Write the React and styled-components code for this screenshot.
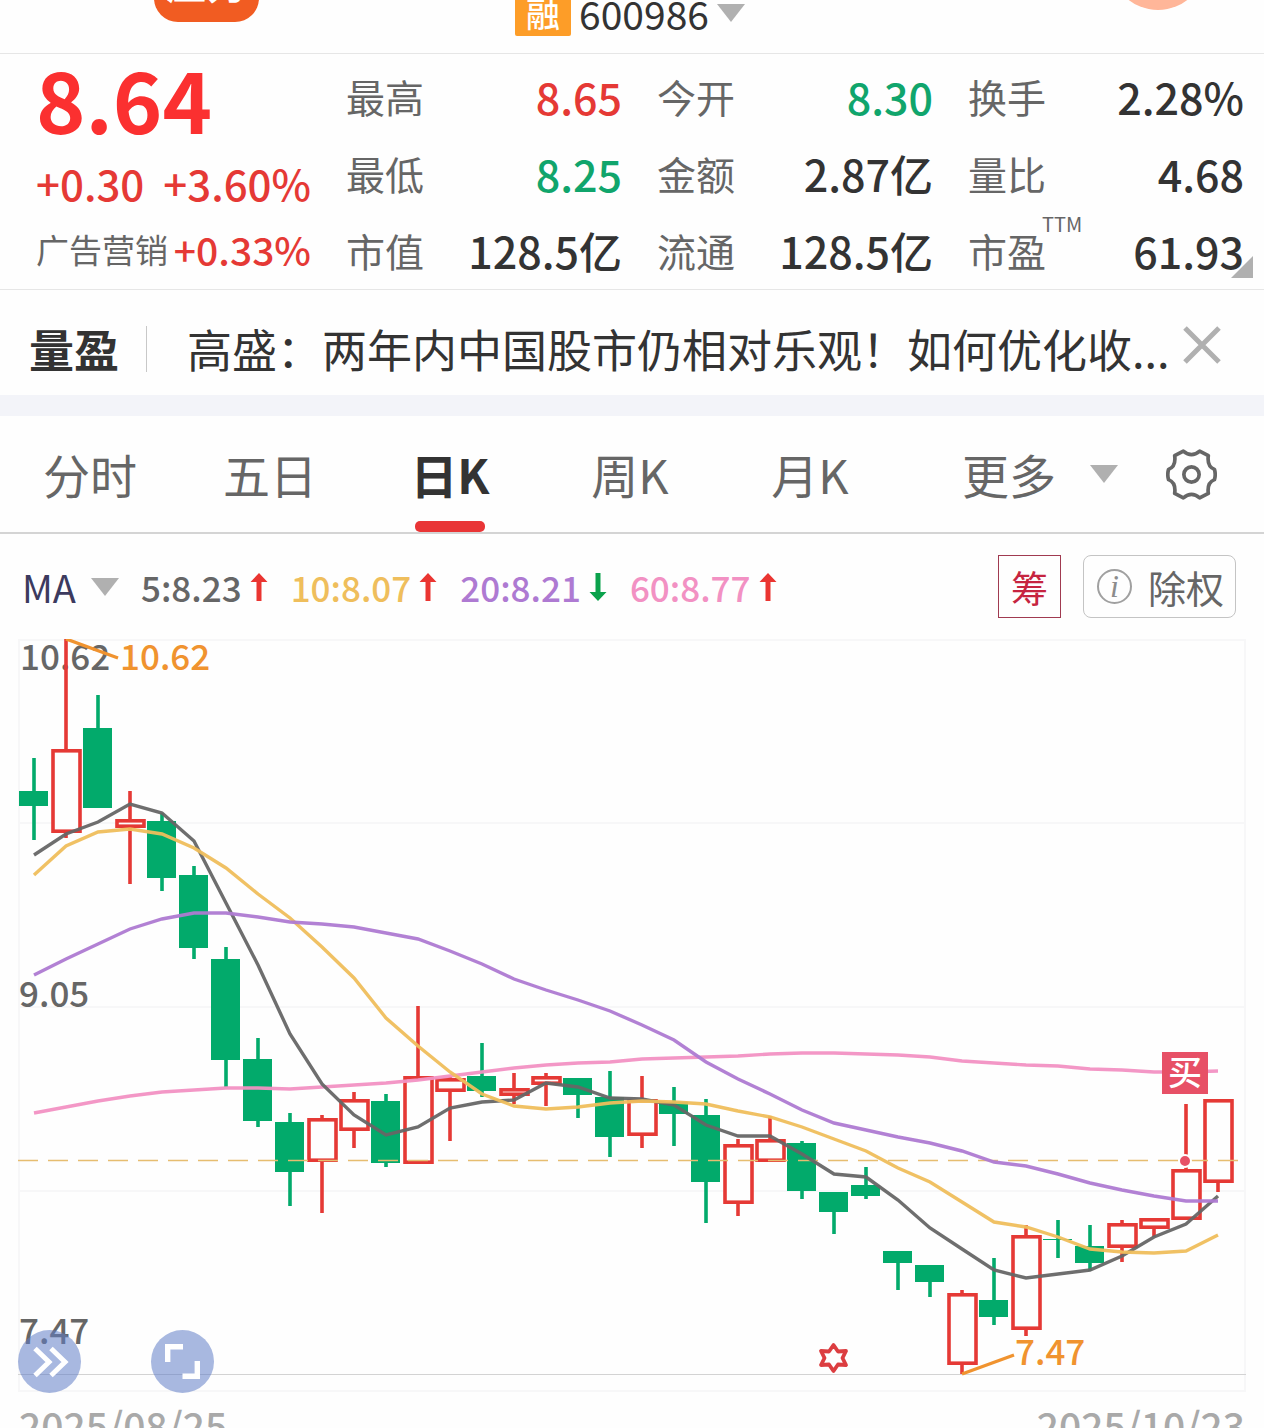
import React from "react";
import styled, { createGlobalStyle } from "styled-components";

const color = {
  red: "#e53935",
  brightRed: "#fb3030",
  green: "#10a56c",
  candleGreen: "#02aa6b",
  ink: "#333333",
  label: "#666666",
  muted: "#b0b0b0",
  orange: "#f0932f",
  ma5: "#666666",
  ma10: "#efbe5c",
  ma20: "#ae7ad2",
  ma60: "#f291c3",
};

const Global = createGlobalStyle`
  * { box-sizing: border-box; }
  body {
    margin: 0;
    background: #fefefe;
    font-family: "Noto Sans CJK SC", "Noto Sans", sans-serif;
    color: ${color.ink};
  }
  button {
    border: 0;
    padding: 0;
    background: none;
    font: inherit;
    color: inherit;
    cursor: pointer;
  }
`;

const Page = styled.main`
  height: 100vh;
  overflow: hidden;
`;

/* ---------- header ---------- */
const Header = styled.header`
  display: grid;
  grid-template-columns: 1fr auto 1fr;
  grid-template-rows: 53px;
  align-items: end;
  height: 54px;
  overflow: hidden;
  border-bottom: 1px solid #e6e6e6;
`;

const CommunityTag = styled.button`
  justify-self: start;
  width: 105px;
  height: 60px;
  margin: 0 0 31px 154px;
  padding-bottom: 20px;
  border-radius: 24px;
  background: #f15c22;
  color: #fff;
  font-size: 40px;
  font-weight: 700;
  line-height: 40px;
`;

const StockPicker = styled.button`
  display: flex;
  align-items: center;
  gap: 8px;
  margin-bottom: 7px;
  padding-right: 4px;
  font-size: 39px;
  line-height: 48px;
`;

const MarginTag = styled.span`
  align-self: flex-end;
  width: 56px;
  height: 56px;
  margin-bottom: 10px;
  border-radius: 2px;
  background: #fd9d28;
  color: #fff;
  font-size: 34px;
  font-weight: 500;
  line-height: 66px;
  text-align: center;
`;

const Caret = styled.span`
  width: 0;
  height: 0;
  border: 14px solid transparent;
  border-top: 18px solid ${color.muted};
  border-bottom: 0;
`;

const Avatar = styled.span`
  justify-self: end;
  width: 96px;
  height: 96px;
  margin: 0 58px 43px 0;
  border-radius: 50%;
  background: #ffb699;
`;

/* ---------- quote ---------- */
const Quote = styled.section`
  display: grid;
  grid-template-columns: 275fr 898fr;
  column-gap: 35px;
  height: 236px;
  padding: 0 20px 0 36px;
  border-bottom: 1px solid #e6e6e6;
  position: relative;
`;

const PriceLine = styled.div`
  display: flex;
  align-items: center;
  justify-content: space-between;
  height: ${(p) => p.$height}px;
  color: ${color.red};
  font-size: ${(p) => p.$size}px;
  font-weight: 500;
  white-space: nowrap;
`;

const Price = styled.strong`
  color: ${color.brightRed};
  font-weight: 700;
`;

const Sector = styled.span`
  color: ${color.label};
  font-size: 33px;
  font-weight: 400;
`;

const StatGrid = styled.dl`
  display: grid;
  grid-template-columns: repeat(3, 1fr);
  grid-auto-rows: 77px;
  column-gap: 35px;
  margin: 3px 0 0;
`;

const Stat = styled.div`
  display: flex;
  align-items: center;
  justify-content: space-between;
  white-space: nowrap;
`;

const StatLabel = styled.dt`
  position: relative;
  color: ${color.label};
  font-size: 39px;
`;

const Superscript = styled.sup`
  position: absolute;
  left: 74px;
  top: -10px;
  font-size: 20px;
  line-height: 24px;
`;

const StatValue = styled.dd`
  margin: 0;
  color: ${(p) => color[p.$tone] || color.ink};
  font-size: 43px;
  font-weight: 500;
`;

const Corner = styled.span`
  position: absolute;
  right: 11px;
  bottom: 11px;
  border: 11px solid ${color.muted};
  border-top-color: transparent;
  border-left-color: transparent;
`;

/* ---------- news ---------- */
const News = styled.section`
  display: flex;
  align-items: center;
  height: 105px;
  padding: 12px 43px 0 29px;
  font-size: 45px;
`;

const NewsBrand = styled.strong`
  padding-right: 27px;
  font-size: 45px;
`;

const Rule = styled.span`
  width: 1px;
  height: 46px;
  margin-right: 40px;
  background: #c8c8c8;
`;

const Headline = styled.a`
  flex: 1;
  min-width: 0;
  overflow: hidden;
  color: inherit;
  text-decoration: none;
  white-space: nowrap;
`;

const CloseButton = styled.button`
  display: flex;
  align-items: flex-start;
  width: 38px;
  height: 46px;
`;

const Band = styled.div`
  height: 21px;
  background: #f3f4f9;
`;

/* ---------- tabs ---------- */
const Tabs = styled.nav`
  display: grid;
  grid-template-columns: repeat(5, 180fr) 364fr;
  height: 118px;
  border-bottom: 2px solid #d4d4d4;
`;

const Tab = styled.button`
  display: flex;
  flex-direction: column;
  align-items: center;
  justify-content: flex-end;
  color: ${(p) => (p.$active ? color.ink : color.label)};
  font-size: 47px;
  font-weight: ${(p) => (p.$active ? 700 : 400)};
  line-height: 94px;

  &::after {
    content: "";
    width: 70px;
    height: 11px;
    border-radius: 5px;
    background: ${(p) => (p.$active ? "#e93536" : "transparent")};
  }
`;

const TabTools = styled.div`
  display: flex;
  align-items: center;
  justify-content: space-between;
  padding: 0 47px 0 62px;
`;

const MoreButton = styled.button`
  display: flex;
  align-items: center;
  gap: 34px;
  color: ${color.label};
  font-size: 47px;
  line-height: 94px;
`;

const SettingsButton = styled.button`
  width: 51px;
  height: 51px;
  svg { display: block; }
`;

/* ---------- indicators ---------- */
const Indicators = styled.section`
  display: flex;
  align-items: center;
  gap: 22px;
  height: 105px;
  padding: 0 28px 0 22px;
`;

const IndicatorPicker = styled.button`
  display: flex;
  align-items: center;
  gap: 15px;
  color: #3c3a5e;
  font-size: 38px;
`;

const Average = styled.span`
  display: flex;
  align-items: center;
  gap: 7px;
  color: ${(p) => color[p.$line]};
  font-size: 35px;
  font-weight: 500;
  line-height: 48px;
  white-space: nowrap;
`;

const ChipButton = styled.button`
  width: 63px;
  height: 63px;
  margin-left: auto;
  border: 1px solid #a03a50;
  color: #c62440;
  font-size: 37px;
  line-height: 60px;
`;

const RightsButton = styled.button`
  display: flex;
  align-items: center;
  justify-content: space-between;
  width: 153px;
  height: 63px;
  padding: 0 11px 0 13px;
  border: 1px solid #c4c4c4;
  border-radius: 8px;
  color: ${color.label};
  font-size: 38px;
  line-height: 60px;
`;

const InfoMark = styled.span`
  width: 35px;
  height: 35px;
  border: 2px solid #a0a0a0;
  border-radius: 50%;
  color: #8c8c8c;
  font: italic 400 32px/30px "Liberation Serif", serif;
  text-align: center;
`;

/* ---------- chart ---------- */
const ChartArea = styled.section`
  position: relative;
`;

const ChartSvg = styled.svg`
  display: block;
  width: 100%;
  height: auto;
  font-size: 35px;
  font-weight: 500;
`;

const FloatingTools = styled.div`
  position: absolute;
  left: 18px;
  bottom: 10px;
  display: flex;
  gap: 70px;
`;

const RoundButton = styled.button`
  width: 63px;
  height: 63px;
  border-radius: 50%;
  background: rgba(97, 126, 199, 0.55);
  svg { display: block; }
`;

const Dates = styled.div`
  display: flex;
  justify-content: space-between;
  padding: 0 19px;
  color: #a9a9a9;
  font-size: 39px;
  font-weight: 500;
  line-height: 42px;
`;

/* direction, high, body top, body bottom, low */
const candles = [
  ["down", 758, 791, 806, 840],
  ["up", 639, 749, 833, 838],
  ["down", 695, 728, 808, 808],
  ["up", 791, 819, 828, 884],
  ["down", 813, 821, 878, 891],
  ["down", 866, 875, 948, 959],
  ["down", 947, 959, 1060, 1087],
  ["down", 1038, 1059, 1121, 1127],
  ["down", 1113, 1122, 1172, 1206],
  ["up", 1115, 1118, 1162, 1213],
  ["up", 1092, 1099, 1131, 1148],
  ["down", 1094, 1101, 1163, 1167],
  ["up", 1006, 1076, 1164, 1164],
  ["up", 1077, 1078, 1092, 1141],
  ["down", 1043, 1076, 1091, 1097],
  ["up", 1073, 1088, 1096, 1104],
  ["up", 1073, 1076, 1085, 1106],
  ["down", 1078, 1078, 1095, 1118],
  ["down", 1071, 1097, 1137, 1157],
  ["up", 1076, 1099, 1136, 1148],
  ["down", 1087, 1102, 1114, 1146],
  ["down", 1099, 1115, 1182, 1223],
  ["up", 1139, 1144, 1204, 1216],
  ["up", 1116, 1139, 1162, 1162],
  ["down", 1141, 1143, 1191, 1199],
  ["down", 1192, 1192, 1212, 1234],
  ["down", 1167, 1185, 1196, 1199],
  ["down", 1251, 1251, 1263, 1290],
  ["down", 1265, 1265, 1282, 1297],
  ["up", 1290, 1293, 1365, 1374],
  ["down", 1258, 1300, 1317, 1325],
  ["up", 1225, 1235, 1330, 1336],
  ["down", 1220, 1239, 1240, 1258],
  ["down", 1225, 1246, 1263, 1271],
  ["up", 1220, 1223, 1248, 1262],
  ["up", 1218, 1218, 1229, 1237],
  ["up", 1104, 1169, 1220, 1220],
  ["up", 1099, 1099, 1183, 1192],
];

const averages = {
  ma60: [1113, 1107, 1101, 1096, 1092, 1090, 1088, 1088, 1089, 1087, 1085, 1083, 1080, 1076, 1072, 1068, 1065, 1063, 1062, 1059, 1058, 1057, 1056, 1054, 1053, 1053, 1054, 1055, 1057, 1061, 1063, 1065, 1066, 1069, 1070, 1072, 1072, 1071],
  ma5: [855, 834, 822, 804, 813, 841, 903, 965, 1034, 1084, 1115, 1135, 1127, 1108, 1102, 1100, 1083, 1087, 1098, 1099, 1105, 1125, 1136, 1136, 1154, 1174, 1177, 1200, 1228, 1249, 1270, 1278, 1274, 1270, 1256, 1237, 1224, 1196],
  ma10: [875, 846, 832, 829, 834, 848, 868, 894, 918, 947, 978, 1018, 1046, 1072, 1094, 1106, 1109, 1107, 1103, 1101, 1102, 1104, 1111, 1117, 1127, 1139, 1151, 1168, 1182, 1202, 1222, 1227, 1237, 1249, 1252, 1253, 1251, 1235],
  ma20: [975, 959, 944, 929, 919, 913, 913, 917, 922, 924, 927, 933, 939, 951, 964, 979, 990, 1000, 1011, 1025, 1040, 1062, 1079, 1094, 1110, 1123, 1130, 1137, 1143, 1151, 1162, 1166, 1174, 1183, 1190, 1196, 1201, 1201],
};

const slot = (i) => 34 + 32 * i;

function Candle({ index, data }) {
  const [dir, high, top, bottom, low] = data;
  const x = slot(index);
  const up = dir === "up";
  const stroke = up ? color.red : color.candleGreen;
  return (
    <g>
      <path d={`M${x} ${high}V${low}`} stroke={stroke} strokeWidth="3.6" />
      {up ? (
        <rect x={x - 13} y={top + 1.8} width="27" height={Math.max(bottom - top - 3.6, 1)} fill="#fefefe" stroke={stroke} strokeWidth="3.6" />
      ) : (
        <rect x={x - 15} y={top} width="29" height={bottom - top} fill={stroke} />
      )}
    </g>
  );
}

function Chart() {
  return (
    <ChartSvg viewBox="0 639 1264 764" role="img" aria-label="日K线图">
      <g stroke="#f7f7f8" strokeWidth="2">
        {[640, 823, 1007, 1191, 1391].map((y) => (
          <path key={y} d={`M18 ${y}H1246`} />
        ))}
        <path d="M19 639V1392M1245 639V1392" />
      </g>
      <path d="M18 1374.5H1246" stroke="#d3d3d3" />
      <g fill={color.label}>
        <text x="20" y="670">10.62</text>
        <text x="19" y="1007">9.05</text>
        <text x="19" y="1344">7.47</text>
      </g>
      {candles.map((c, i) => (
        <Candle key={i} index={i} data={c} />
      ))}
      <path d="M18 1160.5H1238" stroke="#e6bd70" strokeWidth="1.4" strokeDasharray="20 10" />
      {Object.entries(averages).map(([name, ys]) => (
        <polyline
          key={name}
          points={ys.map((y, i) => `${slot(i)},${y}`).join(" ")}
          fill="none"
          stroke={color[name]}
          strokeOpacity="0.95"
          strokeWidth="3.4"
        />
      ))}
      <g fill={color.orange}>
        <path d="M66 639L118 658M962 1374L1014 1355" stroke={color.orange} strokeWidth="3.4" />
        <text x="120" y="670">10.62</text>
        <text x="1015" y="1365">7.47</text>
      </g>
      <path
        d="M833.5 1345L838 1351.500L846 1351L842.500 1358L846 1365L838 1364.500L833.500 1371L829 1364.500L821 1365L824.500 1358L821 1351L829 1351.500Z"
        fill="none"
        stroke="#dc3d40"
        strokeWidth="3.8"
        strokeLinejoin="round"
      />
      <circle cx="1185" cy="1161" r="6" fill="#e75066" stroke="#fefefe" strokeWidth="2" />
      <rect x="1162" y="1052" width="46" height="42" fill="#e75066" />
      <text x="1185" y="1085" fill="#fff" fontSize="34" textAnchor="middle">买</text>
    </ChartSvg>
  );
}

function TrendArrow({ down }) {
  return (
    <svg width="20" height="30" viewBox="0 0 20 30" aria-hidden="true">
      <path
        d={down ? "M7.500 1H12.500V20H18.500L10 29L1.500 20H7.500Z" : "M7.500 29H12.500V10H18.500L10 1L1.500 10H7.500Z"}
        fill={down ? "#0ba24c" : "#ea3531"}
      />
    </svg>
  );
}

const stats = [
  { label: "最高", value: "8.65", tone: "red" },
  { label: "今开", value: "8.30", tone: "green" },
  { label: "换手", value: "2.28%" },
  { label: "最低", value: "8.25", tone: "green" },
  { label: "金额", value: "2.87亿" },
  { label: "量比", value: "4.68" },
  { label: "市值", value: "128.5亿" },
  { label: "流通", value: "128.5亿" },
  { label: "市盈", value: "61.93", note: "TTM" },
];

const tabs = ["分时", "五日", "日K", "周K", "月K"];

const readings = [
  { line: "ma5", text: "5:8.23" },
  { line: "ma10", text: "10:8.07" },
  { line: "ma20", text: "20:8.21", down: true },
  { line: "ma60", text: "60:8.77" },
];

export default function App() {
  return (
    <Page>
      <Global />
      <Header>
        <CommunityTag>压力</CommunityTag>
        <StockPicker>
          <MarginTag>融</MarginTag>
          600986
          <Caret />
        </StockPicker>
        <Avatar />
      </Header>

      <Quote>
        <div>
          <PriceLine $height={86} $size={84}>
            <Price>8.64</Price>
          </PriceLine>
          <PriceLine $height={84} $size={42}>
            <span>+0.30</span>
            <span>+3.60%</span>
          </PriceLine>
          <PriceLine $height={50} $size={39}>
            <Sector>广告营销</Sector>
            <span>+0.33%</span>
          </PriceLine>
        </div>
        <StatGrid>
          {stats.map((s) => (
            <Stat key={s.label}>
              <StatLabel>
                {s.label}
                {s.note && <Superscript>{s.note}</Superscript>}
              </StatLabel>
              <StatValue $tone={s.tone}>{s.value}</StatValue>
            </Stat>
          ))}
        </StatGrid>
        <Corner />
      </Quote>

      <News>
        <NewsBrand>量盈</NewsBrand>
        <Rule />
        <Headline href="#news">高盛：两年内中国股市仍相对乐观！如何优化收...</Headline>
        <CloseButton aria-label="关闭">
          <svg width="38" height="38" viewBox="0 0 38 38">
            <path d="M2 2L36 36M36 2L2 36" stroke={color.muted} strokeWidth="5" />
          </svg>
        </CloseButton>
      </News>
      <Band />

      <Tabs>
        {tabs.map((t) => (
          <Tab key={t} $active={t === "日K"}>{t}</Tab>
        ))}
        <TabTools>
          <MoreButton>
            更多
            <Caret />
          </MoreButton>
          <SettingsButton aria-label="设置">
            <svg width="51" height="51" viewBox="0 0 50 50" fill="none" stroke={color.label} strokeWidth="3.6" strokeLinejoin="round">
              <path d="M17 2Q25 9 33 2L41.500 6.500Q40 17 47.500 20Q49 25 47.500 30Q40 33 41.500 43.500L33 48Q25 41 17 48L8.500 43.500Q10 33 2.500 30Q1 25 2.500 20Q10 17 8.500 6.500Z" />
              <circle cx="25" cy="25" r="7.5" />
            </svg>
          </SettingsButton>
        </TabTools>
      </Tabs>

      <Indicators>
        <IndicatorPicker>
          MA
          <Caret />
        </IndicatorPicker>
        {readings.map((r) => (
          <Average key={r.line} $line={r.line}>
            {r.text}
            <TrendArrow down={r.down} />
          </Average>
        ))}
        <ChipButton>筹</ChipButton>
        <RightsButton>
          <InfoMark>i</InfoMark>
          除权
        </RightsButton>
      </Indicators>

      <ChartArea>
        <Chart />
        <FloatingTools>
          <RoundButton aria-label="展开">
            <svg width="63" height="63" viewBox="0 0 63 63" fill="none" stroke="#fff" strokeWidth="5">
              <path d="M17 18.500L31 32L17 45.500M33 18.500L47 32L33 45.500" />
            </svg>
          </RoundButton>
          <RoundButton aria-label="全屏">
            <svg width="63" height="63" viewBox="0 0 63 63" fill="none" stroke="#fff" strokeWidth="5.4">
              <path d="M16.700 32V16.700H32M46.300 31V46.300H31.500" />
            </svg>
          </RoundButton>
        </FloatingTools>
      </ChartArea>
      <Dates>
        <time dateTime="2025-08-25">2025/08/25</time>
        <time dateTime="2025-10-23">2025/10/23</time>
      </Dates>
    </Page>
  );
}
